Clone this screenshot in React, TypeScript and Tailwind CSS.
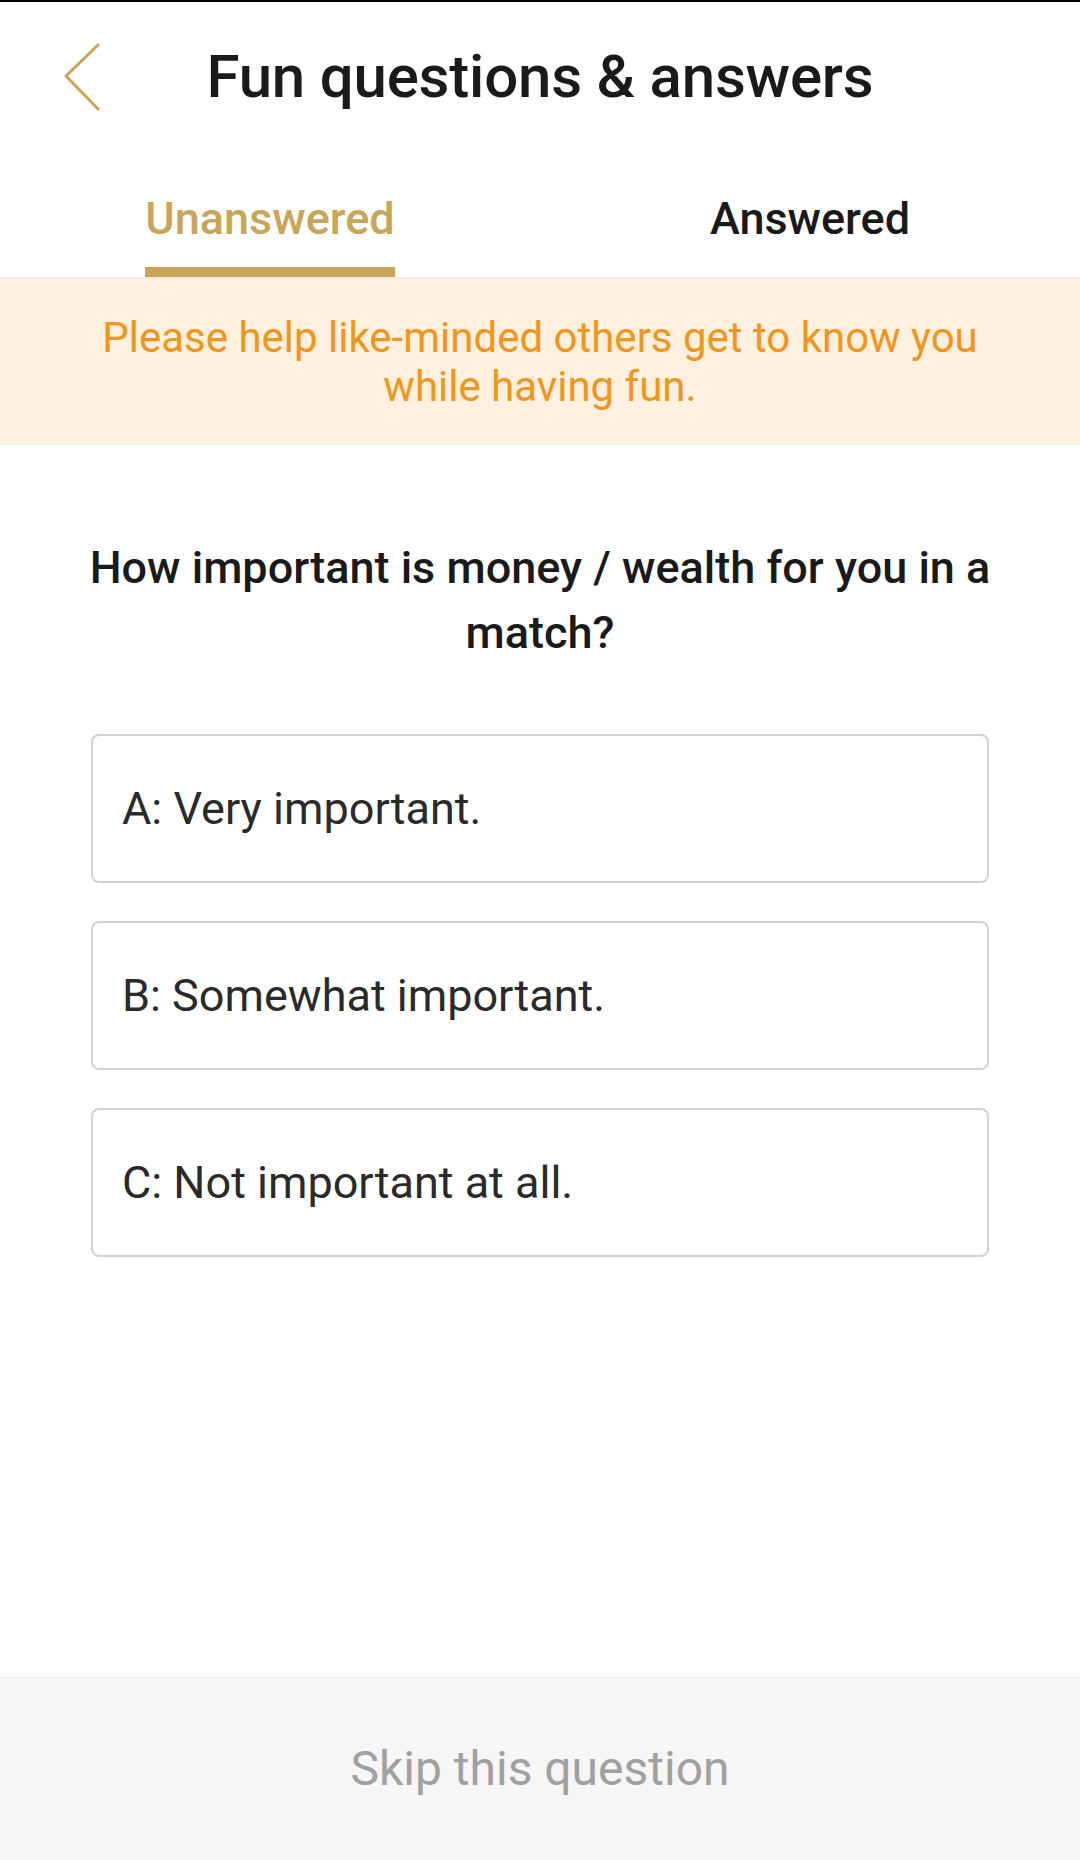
import { useState } from "react";

const GOLD = "#c9a55a";

const options = [
  { key: "A", label: "Very important." },
  { key: "B", label: "Somewhat important." },
  { key: "C", label: "Not important at all." },
];

function BackChevron() {
  return (
    <svg width="40" height="68" viewBox="0 0 40 68" fill="none">
      <path
        d="M35 2 L3 33 L35 66"
        stroke={GOLD}
        strokeWidth="3"
        strokeLinecap="round"
        strokeLinejoin="round"
      />
    </svg>
  );
}

export default function App() {
  const [tab, setTab] = useState<"unanswered" | "answered">("unanswered");
  const tabs = [
    { id: "unanswered" as const, label: "Unanswered" },
    { id: "answered" as const, label: "Answered" },
  ];

  return (
    <div
      className="flex flex-col h-[1860px] w-[1080px] bg-white border-t-2 border-black"
      style={{ fontFamily: "Roboto, 'Noto Sans', sans-serif" }}
    >
      <header className="grid grid-cols-[1fr_auto_1fr] items-center h-[150px]">
        <button className="pl-[63px] justify-self-start">
          <BackChevron />
        </button>
        <h1 className="text-[60px] font-medium text-[#1a1a1a] tracking-[-0.2px]">
          Fun questions &amp; answers
        </h1>
        <div />
      </header>

      <nav className="grid grid-cols-2 h-[127px] border-b-2 border-[#efeae3]">
        {tabs.map(({ id, label }) => (
          <button
            key={id}
            onClick={() => setTab(id)}
            className="flex justify-center items-end"
          >
            <span className="inline-flex flex-col items-stretch">
              <span
                className={
                  "text-[45px] font-medium leading-none " +
                  (tab === id ? "text-[#c9a55a]" : "text-[#1a1a1a]")
                }
              >
                {label}
              </span>
              <span
                className={
                  "mt-[26px] h-[10px] " +
                  (tab === id ? "bg-[#c9a55a]" : "bg-transparent")
                }
              />
            </span>
          </button>
        ))}
      </nav>

      <div className="bg-[#fdf0de] h-[166px] flex items-center justify-center px-[80px]">
        <p className="text-center text-[42px] leading-[49px] text-[#f0961d]">
          Please help like-minded others get to know you while having fun.
        </p>
      </div>

      <h2 className="mt-[90px] px-[70px] text-center text-[45px] leading-[65px] font-medium text-[#1a1a1a]">
        How important is money / wealth for you in a match?
      </h2>

      <div className="mt-[69px] px-[91px] flex flex-col gap-[38px]">
        {options.map(({ key, label }) => (
          <button
            key={key}
            className="h-[149px] flex items-center px-[29px] border-2 border-[#d2d2d2] rounded-[8px] text-left text-[45px] text-[#2a2a2a]"
          >
            {key}: {label}
          </button>
        ))}
      </div>

      <div className="flex-1" />

      <button className="h-[183px] bg-[#f6f6f6] border-t border-[#eeeeee] flex items-center justify-center text-[48px] text-[#a0a0a0]">
        Skip this question
      </button>
    </div>
  );
}
